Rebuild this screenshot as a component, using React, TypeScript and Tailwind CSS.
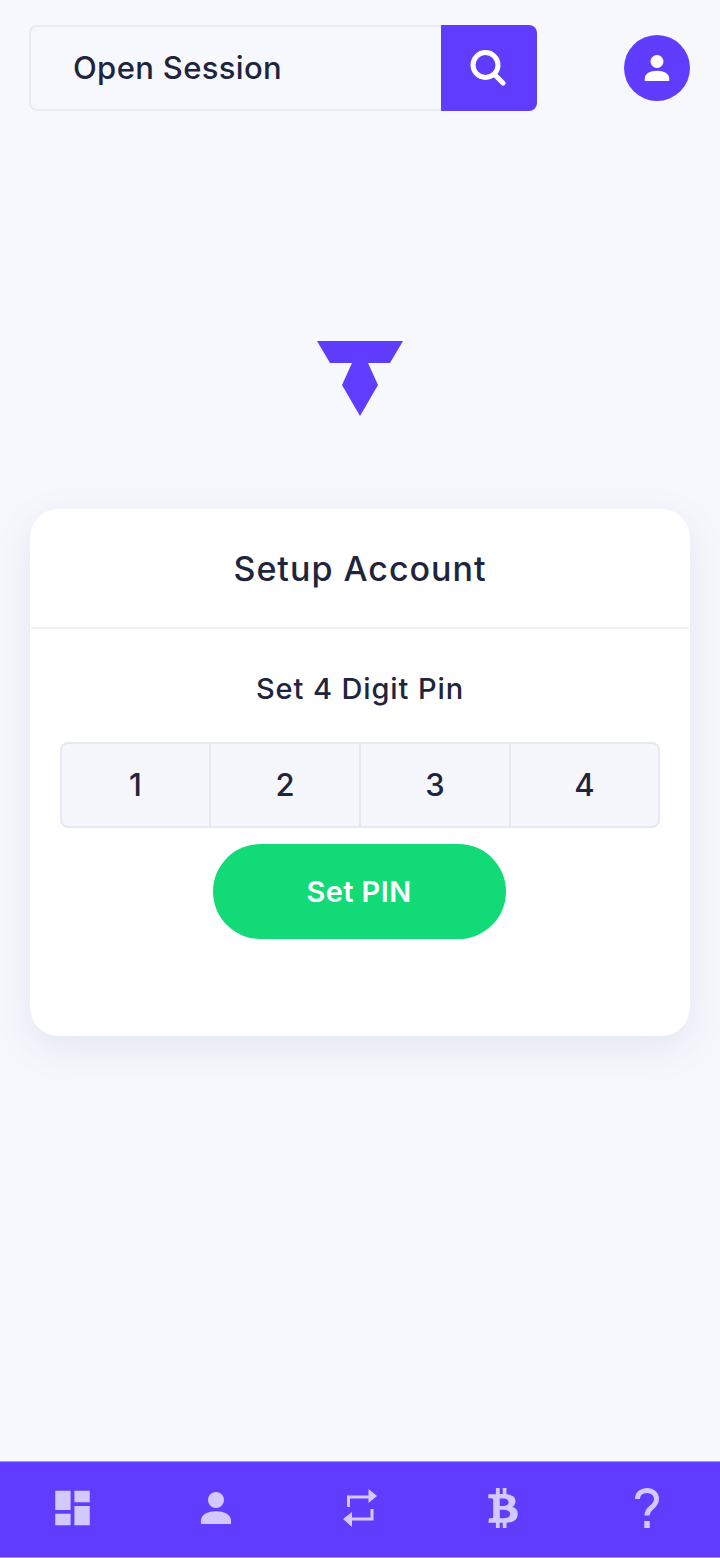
import { FaBtc } from 'react-icons/fa';
import { MdDashboard } from 'react-icons/md';

function PersonIcon({ className }: { className: string }) {
  return (
    <svg viewBox="0 0 34 34" className={className} fill="currentColor">
      <ellipse cx="17" cy="8.5" rx="8.5" ry="8.5" />
      <path d="M1 34v-3c0-7 7-10.500 16-10.500s16 3.500 16 10.500v3z" />
    </svg>
  );
}

function RepeatIcon({ className }: { className: string }) {
  return (
    <svg viewBox="0 0 34 38" className={className} fill="currentColor">
      <path d="M4 18V6.500h21.500V0L34 7l-8.500 7V9.500H7V18z" />
      <path d="M30.500 20v11.500H9V38L0 30l9-7v5.500h18.500V20z" />
    </svg>
  );
}

function QuestionIcon({ className }: { className: string }) {
  return (
    <svg viewBox="0 0 24 40" className={className} fill="none" stroke="currentColor" strokeWidth="5">
      <path d="M2.500 11C2.500 5.500 6.500 2.500 12 2.500s9.500 3.500 9.500 8.500c0 4.500-2.500 6.500-5 8.500s-4.500 4-4.500 8" />
      <path d="M12 33v7" strokeWidth="5.500" />
    </svg>
  );
}

const navIcons = [
  <MdDashboard key="dash" className="w-[47px] h-[46px] shrink-0 text-[#d2c9ff]" />,
  <PersonIcon key="user" className="w-[32px] h-[32px] shrink-0 text-[#d2c9ff]" />,
  <RepeatIcon key="swap" className="w-[34px] h-[38px] shrink-0 text-[#d2c9ff]" />,
  <FaBtc key="btc" className="w-[38px] h-[40px] shrink-0 text-[#d2c9ff]" />,
  <QuestionIcon key="help" className="w-[24px] h-[40px] shrink-0 text-[#d2c9ff]" />,
];

export default function App() {
  return (
    <div className="min-h-[1558px] w-[720px] flex flex-col bg-[#f6f8fd] font-['Inter','Liberation_Sans',sans-serif] text-[#21243d]">
      {/* Top bar */}
      <div className="flex items-center justify-between pl-[29px] pr-[30px] pt-[25px]">
        <div className="flex h-[86px] w-[508px]">
          <div className="flex flex-1 items-center rounded-l-[8px] border-2 border-r-0 border-[#e9ebf3] pl-[42px] text-[31px] font-[550] tracking-[0.35px]">
            Open Session
          </div>
          <div className="flex w-[96px] items-center justify-center rounded-r-[8px] bg-[#603cff] pr-[3px]">
            <svg viewBox="0 0 36 36" className="w-[36px] h-[36px]" fill="none" stroke="white" strokeWidth="5" strokeLinecap="round">
              <circle cx="15.500" cy="15" r="12.500" />
              <path d="M26 26l7 7" />
            </svg>
          </div>
        </div>
        <div className="flex h-[66px] w-[66px] items-center justify-center rounded-full bg-[#603cff]">
          <PersonIcon className="w-[26px] h-[26px] text-white" />
        </div>
      </div>

      {/* Logo */}
      <div className="flex justify-center pt-[230px]">
        <svg viewBox="0 0 86 76" className="w-[86px] h-[76px]" fill="#603cff">
          <path d="M0 0h86L73 22H51L61 44 43 75 25 44 35 22H13z" />
        </svg>
      </div>

      {/* Card */}
      <div className="mx-[30px] mt-[92px] h-[527px] rounded-[28px] bg-white border border-white shadow-[0_12px_40px_rgba(60,60,120,0.09)]">
        <div className="flex h-[119px] items-center justify-center border-b-2 border-[#eff0f5] text-[34px] font-[550] tracking-[1px]">
          Setup Account
        </div>
        <div className="flex flex-col items-center px-[29px]">
          <div className="mt-[40px] text-[29px] font-[550] leading-[40px] tracking-[0.9px]">Set 4 Digit Pin</div>
          <div className="mt-[33px] grid h-[86px] w-full grid-cols-[149px_150px_150px_1fr] overflow-hidden rounded-[8px] border-2 border-[#e7e9f1] bg-[#f6f7fd]">
            {['1', '2', '3', '4'].map((d, i) => (
              <div
                key={d}
                className={`flex items-center justify-center text-[31px] font-[550] ${i < 3 ? 'border-r-2 border-[#e7e9f1]' : ''}`}
              >
                {d}
              </div>
            ))}
          </div>
          <button className="mt-[16px] mr-[2px] h-[95px] w-[293px] rounded-full bg-[#12da76] text-[29px] font-semibold tracking-[0.4px] text-white">
            Set PIN
          </button>
        </div>
      </div>

      {/* Bottom nav */}
      <div className="mt-auto flex h-[97px] items-center justify-between border-t border-b border-[#a392ff] bg-[#603cff] pb-[3px] pl-[50px] pr-[51px]">
        {navIcons.map((icon, i) => (
          <div key={i} className="flex w-[44px] justify-center">
            {icon}
          </div>
        ))}
      </div>
    </div>
  );
}
